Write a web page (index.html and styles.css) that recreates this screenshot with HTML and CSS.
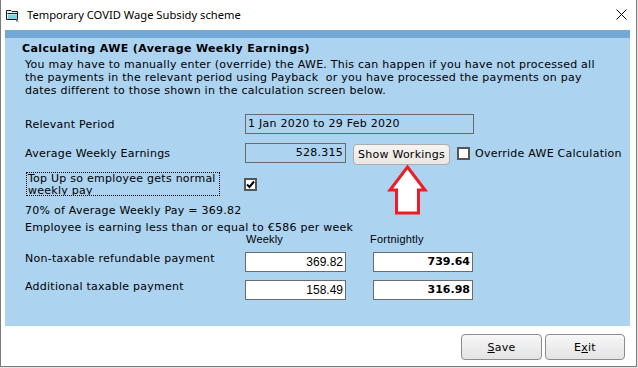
FILE: index.html
```html
<!DOCTYPE html>
<html lang="en">
<head>
    <meta charset="UTF-8" />
    <meta name="viewport" content="width=device-width, initial-scale=1.0" />
    <title>Temporary COVID Wage Subsidy scheme</title>
    <link rel="stylesheet" href="styles.css">
</head>
<body>
    <div class="window">
        <div class="titlebar">
            <svg class="app-icon" width="14" height="13" viewBox="0 0 14 13">
                <path d="M0.5 1.5 H5 L6 2.5 H11.5 V10.5 H0.5 Z" fill="#e8f6f8" stroke="#1a1a1a" />
                <path d="M1.5 4.5 H11" stroke="#1a1a1a" />
                <path d="M2 5.5 H11 V10 H2 Z" fill="#7fd3e0" />
                <path d="M10 10 L13 12.5 L10 12.5 Z" fill="#707070" />
            </svg>
            <span class="title">Temporary COVID Wage Subsidy scheme</span>
            <svg class="close-icon" width="11" height="11" viewBox="0 0 11 11">
                <path d="M0.5 0.5 L10.5 10.5 M10.5 0.5 L0.5 10.5" stroke="#000" stroke-width="1" />
            </svg>
        </div>

        <div class="panel">
            <div class="panel-strip"></div>
            <h1 class="heading">Calculating AWE (Average Weekly Earnings)</h1>
            <p class="intro">You may have to manually enter (override) the AWE. This can happen if you have not processed all<br>the payments in the relevant period using Payback &nbsp;or you have processed the payments on pay<br>dates different to those shown in the calculation screen below.</p>

            <div class="row row-period">
                <div class="field-label">Relevant Period</div>
                <div class="field field-wide disabled">1 Jan 2020 to 29 Feb 2020</div>
            </div>

            <div class="row row-awe">
                <div class="field-label">Average Weekly Earnings</div>
                <div class="field field-num disabled">528.315</div>
                <button class="small-btn">Show Workings</button>
                <span class="checkbox"></span>
                <span class="check-label">Override AWE Calculation</span>
            </div>

            <div class="row row-topup">
                <div class="focus-label">Top Up so employee gets normal weekly pay</div>
                <span class="checkbox checked">
                    <svg width="9" height="9" viewBox="0 0 9 9">
                        <path d="M1 4.5 L3.5 7 L8 1.5" fill="none" stroke="#000" stroke-width="2" />
                    </svg>
                </span>
            </div>

            <div class="note note-pct">70% of Average Weekly Pay = 369.82</div>
            <div class="note note-limit">Employee is earning less than or equal to €586 per week</div>

            <div class="row col-heads">
                <span class="col-head">Weekly</span>
                <span class="col-head col-fort">Fortnightly</span>
            </div>

            <div class="row row-pay">
                <div class="field-label top">Non-taxable refundable payment</div>
                <div class="field field-num value">369.82</div>
                <div class="field field-num value bold">739.64</div>
            </div>

            <div class="row row-pay">
                <div class="field-label top">Additional taxable payment</div>
                <div class="field field-num value">158.49</div>
                <div class="field field-num value bold">316.98</div>
            </div>

            <svg class="arrow" width="43" height="52" viewBox="0 0 43 52">
                <polygon points="21.5,3 39,26 32.5,26 32.5,49 10.5,49 10.5,26 4,26" fill="#fff" stroke="#ee1c24" stroke-width="3" />
            </svg>
        </div>

        <div class="footer">
            <button class="btn"><u>S</u>ave</button>
            <button class="btn">E<u>x</u>it</button>
        </div>
    </div>
</body>
</html>
```

FILE: styles.css
```css
* {
    box-sizing: border-box;
}

body {
    margin: 0;
    background-color: #e4e4e4;
    font-family: "DejaVu Sans", Verdana, sans-serif;
    font-size: 11px;
    color: #000;
}

.window {
    width: 637px;
    height: 367px;
    background: #fff;
    border: 1px solid #7a7a7a;
    border-top: none;
    display: flex;
    flex-direction: column;
}

.titlebar {
    height: 30px;
    display: flex;
    align-items: center;
    padding-left: 5px;
    flex: none;
}

.app-icon {
    margin-top: 1px;
}

.title {
    font-family: "Noto Sans", "Open Sans", sans-serif;
    font-size: 11.2px;
    margin-left: 7px;
    margin-top: -1px;
}

.close-icon {
    margin-left: auto;
    margin-right: 9px;
    margin-top: -2px;
}

.panel {
    flex: none;
    height: 296px;
    margin: 0 6px 0 4px;
    background-color: #acd3f0;
    position: relative;
    letter-spacing: 0.25px;
}

.panel-strip {
    height: 8px;
    background-color: #73a7d5;
}

.heading {
    font-size: 11px;
    font-weight: bold;
    line-height: 14px;
    letter-spacing: 0.37px;
    margin: 4px 0 0;
    padding-left: 17px;
}

.intro {
    margin: 2px 0 0;
    padding-left: 20px;
    line-height: 13px;
    white-space: nowrap;
}

.row {
    display: flex;
    align-items: flex-start;
    padding-left: 20px;
}

.field-label {
    width: 220px;
    line-height: 20px;
    padding-top: 1px;
    flex: none;
}

.field-label.top {
    line-height: 14px;
    padding-top: 0;
}

.field {
    height: 20px;
    border: 1px solid #6b6b6b;
    background: #fff;
    line-height: 18px;
    padding: 0 2px;
    white-space: nowrap;
    flex: none;
}

.field.disabled {
    background: transparent;
}

.field-wide {
    width: 229px;
    padding-left: 2px;
}

.field-num {
    width: 101px;
    text-align: right;
}

.row-period {
    margin-top: 17px;
}

.row-awe {
    margin-top: 8px;
}

.small-btn {
    font-family: inherit;
    font-size: 11px;
    letter-spacing: 0.25px;
    height: 21px;
    width: 97px;
    margin: 1px 0 0 7px;
    padding: 0;
    border: 1px solid #acacac;
    border-radius: 4px;
    background: linear-gradient(#f6f4f2, #ebe6e2);
    color: #000;
}

.checkbox {
    width: 13px;
    height: 13px;
    border: 2px solid #555;
    background: #fff;
    display: inline-flex;
    align-items: center;
    justify-content: center;
    flex: none;
}

.row-awe .checkbox {
    margin: 4px 0 0 7px;
}

.check-label {
    margin-left: 5px;
    line-height: 20px;
    padding-top: 1px;
}

.row-topup {
    margin-top: 7px;
}

.focus-label {
    width: 194px;
    height: 24px;
    margin-left: 1px;
    border: 1px dotted #000;
    line-height: 11.5px;
    overflow: hidden;
    padding-left: 1px;
}

.row-topup .checkbox {
    margin: 6px 0 0 24px;
}

.note {
    padding-left: 20px;
}

.note-pct {
    margin-top: 8px;
    line-height: 14px;
}

.note-limit {
    margin-top: 4px;
    line-height: 12px;
}

.col-heads {
    margin-top: -1px;
    padding-left: 241px;
    font-family: "Liberation Sans", Arial, sans-serif;
    font-size: 11px;
    line-height: 12px;
    letter-spacing: 0.2px;
}

.col-fort {
    margin-left: 87px;
}

.row-pay {
    margin-top: 7px;
}

.row-pay + .row-pay {
    margin-top: 8px;
}

.value {
    font-family: "Liberation Sans", Arial, sans-serif;
    font-size: 12px;
    letter-spacing: 0;
}

.value.bold {
    font-family: "DejaVu Sans", Verdana, sans-serif;
    font-size: 11px;
    font-weight: bold;
    width: 100px;
    margin-left: 27px;
}

.arrow {
    position: absolute;
    left: 381px;
    top: 134px;
}

.footer {
    flex: 1;
    display: flex;
    justify-content: flex-end;
    align-items: flex-start;
    gap: 3px;
    padding: 8px 11px 0 0;
}

.btn {
    font-family: inherit;
    font-size: 11px;
    letter-spacing: 0.25px;
    width: 81px;
    height: 26px;
    padding: 0;
    border: 1px solid #8c8c8c;
    border-radius: 4px;
    background: linear-gradient(#f7f7f7, #e3e3e3);
    color: #000;
}

.btn + .btn {
    width: 80px;
}
```
